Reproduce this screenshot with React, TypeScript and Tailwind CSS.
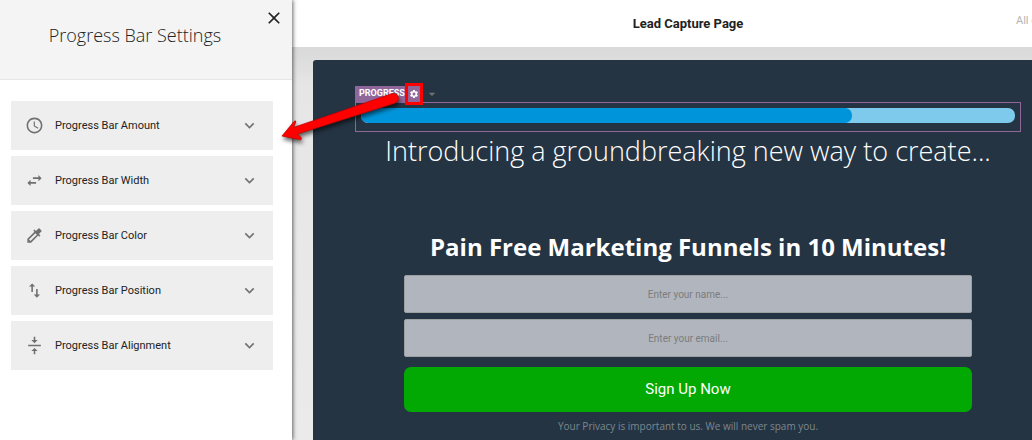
import React, { useState } from 'react';
import {
  MdAccessTime,
  MdArrowDropDown,
  MdClose,
  MdColorize,
  MdExpandMore,
  MdImportExport,
  MdSettings,
  MdSwapHoriz,
  MdVerticalAlignCenter
} from 'react-icons/md';

interface Setting {
  id: string;
  title: string;
  icon: React.ComponentType<{ className?: string }>;
}

const settings: Setting[] = [
  { id: 'amount', title: 'Progress Bar Amount', icon: MdAccessTime },
  { id: 'width', title: 'Progress Bar Width', icon: MdSwapHoriz },
  { id: 'color', title: 'Progress Bar Color', icon: MdColorize },
  { id: 'position', title: 'Progress Bar Position', icon: MdImportExport },
  { id: 'alignment', title: 'Progress Bar Alignment', icon: MdVerticalAlignCenter }
];

function SettingsPanel() {
  const [selected, setSelected] = useState('');

  return (
    <aside className="relative z-10 w-[292px] shrink-0 bg-white shadow-[1px_0_4px_rgba(0,0,0,0.6)]">
      <div className="relative flex h-20 items-center justify-center border-b border-[#e6e6e6] bg-[#f4f4f4] pr-[22px] pb-2.5">
        <h2 className="font-['Open_Sans',sans-serif] text-lg font-light text-[#222222]">
          Progress Bar Settings
        </h2>
        <button aria-label="Close" className="absolute top-2 right-2 text-[#222222]">
          <MdClose className="h-5 w-5" />
        </button>
      </div>

      <div className="flex flex-col gap-1.5 pt-[21px] pr-[19px] pl-[11px]">
        {settings.map((setting) => (
          <button
            key={setting.id}
            aria-pressed={selected === setting.id}
            onClick={() => setSelected(setting.id)}
            className="flex h-[49px] items-center bg-[#eeeeee] pr-3.5 pl-3.5 text-left text-[11px] leading-[17px] text-[#222222]"
          >
            <setting.icon className="h-[19px] w-[19px] text-[#707070]" />
            <span className="ml-[11px] flex-1">{setting.title}</span>
            <MdExpandMore className="h-[19px] w-[19px] text-[#707070]" />
          </button>
        ))}
      </div>
    </aside>
  );
}

function ProgressBlock({ amount }: { amount: number }) {
  return (
    <div className="w-full">
      <div className="flex h-4 items-center text-white">
        <span className="flex h-4 items-center bg-[#90679b] pl-1 text-[9px] font-bold">PROGRESS</span>
        <button
          aria-label="Progress settings"
          className="relative z-10 flex h-[22px] w-[18px] items-center justify-center border-[3px] border-[#ff0000] bg-[#90679b]"
        >
          <MdSettings className="h-2.5 w-2.5 shrink-0" />
        </button>
        <MdArrowDropDown className="ml-px h-4 w-4 text-[#6f7375]" />
      </div>
      <div className="border border-[#90679b] px-[5px] pt-[5px] pb-2">
        <div className="h-[15px] overflow-hidden rounded-[7px] bg-[#7ecaed]">
          <div className="h-full rounded-[7px] bg-[#0095db]" style={{ width: `${amount}%` }} />
        </div>
      </div>
    </div>
  );
}

function SignUpForm() {
  return (
    <form className="flex w-full flex-col px-[49px]" onSubmit={(e) => e.preventDefault()}>
      <input
        type="text"
        aria-label="Name"
        placeholder="Enter your name..."
        className="h-[38px] rounded-[2px] border border-[#9da0a3] bg-[#b1b6be] text-center text-[10px] placeholder-[#7c7c7c]"
      />
      <input
        type="email"
        aria-label="Email"
        placeholder="Enter your email..."
        className="mt-1.5 h-[38px] rounded-[2px] border border-[#9da0a3] bg-[#b1b6be] text-center text-[10px] placeholder-[#7c7c7c]"
      />
      <button type="submit" className="mt-2.5 h-[45px] rounded-[7px] bg-[#02a902] text-[15px] text-white">
        Sign Up Now
      </button>
    </form>
  );
}

// Callout arrow from the gear button to the settings panel
function CalloutArrow() {
  return (
    <svg
      className="pointer-events-none absolute top-20 left-[272px] z-20 drop-shadow-[1px_3px_2px_rgba(0,0,0,0.6)]"
      width="140"
      height="70"
      viewBox="272 80 140 70"
      aria-hidden="true"
    >
      <path
        d="M282 136L294 121.500Q296 120 295.800 122L293.500 127.500L391 94Q396.500 92 398.200 97Q399.300 101.500 394.500 103.300L297.500 134L301 137.500Q302.200 139.500 300.500 139.800Z"
        fill="#ff0000"
        stroke="#c40000"
        strokeWidth="0.8"
        strokeLinejoin="round"
      />
    </svg>
  );
}

export default function App() {
  return (
    <div className="relative flex min-h-screen overflow-hidden bg-white font-[Roboto,sans-serif]">
      <SettingsPanel />

      <main className="flex min-w-0 flex-1 flex-col overflow-hidden">
        <header className="grid h-[47px] grid-cols-[1fr_auto_1fr] items-center bg-white pl-[52px]">
          <h1 className="col-start-2 text-[13px] font-bold text-[#222222]">Lead Capture Page</h1>
          <span className="w-4 justify-self-end pb-1 text-[11px] whitespace-nowrap text-[#b4b4b4]">All c</span>
        </header>

        <div className="flex-1 bg-linear-to-b from-[#d8d9d8] via-[#e6e6e6] via-10% to-[#ebebeb] pt-[13px] pl-[21px]">
          <section className="flex h-full flex-col items-center rounded-tl-[3px] bg-[#253443] pt-[26px] pr-[11px] pl-[42px] text-white">
            <ProgressBlock amount={75} />
            <p className="font-['Open_Sans',sans-serif] text-[27px] leading-[38px] font-light">
              Introducing a groundbreaking new way to create...
            </p>
            <h2 className="mt-[59px] mb-2.5 font-['Open_Sans',sans-serif] text-2xl leading-9 font-bold">
              Pain Free Marketing Funnels in 10 Minutes!
            </h2>
            <SignUpForm />
            <p className="mt-1.5 font-['Open_Sans',sans-serif] text-[10px] leading-4 text-[#7b888f]">
              Your Privacy is important to us. We will never spam you.
            </p>
          </section>
        </div>
      </main>

      <CalloutArrow />
    </div>
  );
}
